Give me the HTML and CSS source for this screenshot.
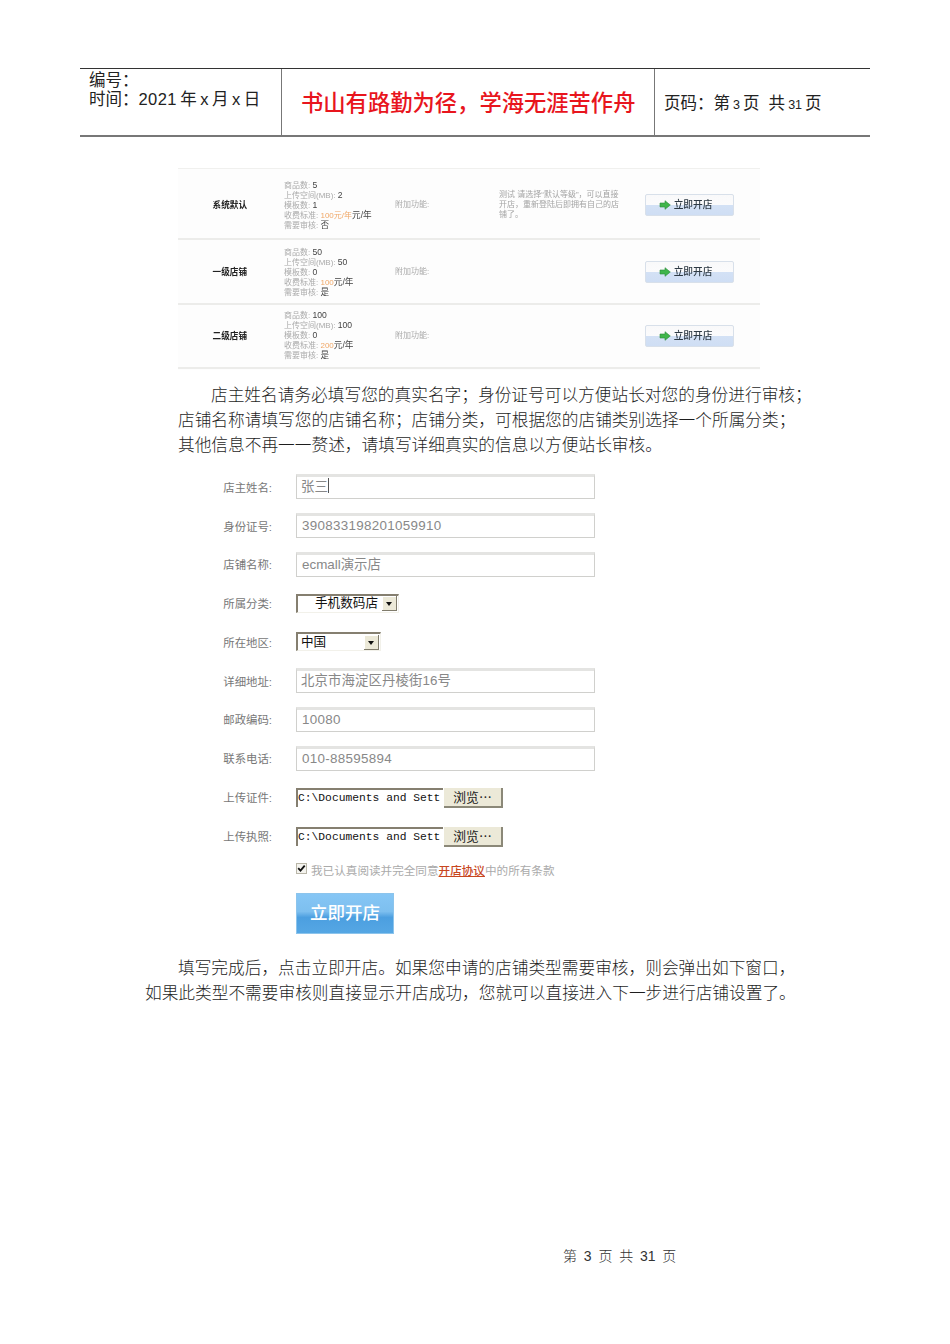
FILE: index.html
```html
<!DOCTYPE html>
<html lang="zh-CN">
<head>
<meta charset="utf-8">
<title>开店</title>
<link rel="stylesheet" href="styles.css">
</head>
<body>
<div class="page">
  <header class="doc-head">
    <div class="hc hc-left">编号&#xFF1A;<br>时间&#xFF1A;<span class="year">2021</span><span class="gap">年</span>x<span class="gap">月</span>x<span class="gap">日</span></div>
    <div class="hc hc-mid">书山有路勤为径&#xFF0C;学海无涯苦作舟</div>
    <div class="hc hc-right">页码&#xFF1A;第<span class="small-num">3</span>页&nbsp;&nbsp;共<span class="small-num">31</span>页</div>
  </header>

  <section class="plans">
    <div class="plan plan-pad">
      <div class="plan-name">系统默认</div>
      <div class="plan-spec"><span>商品数: <b>5</b></span><span>上传空间(MB): <b>2</b></span><span>模板数: <b>1</b></span><span>收费标准: <em>100元/年</em><b>元/年</b></span><span>需要审核: <b>否</b></span></div>
      <div class="plan-extra">附加功能:</div>
      <div class="plan-desc">测试 请选择“默认等级”&#xFF0C;可以直接开店&#xFF0C;重新登陆后即拥有自己的店铺了。</div>
      <div class="plan-btn"><svg class="arrow" viewBox="0 0 12 10"><path d="M1 3h5V0.7L11.3 5 6 9.3V7H1z" fill="#3fb54a" stroke="#2a8a3a" stroke-width=".6"/></svg>立即开店</div>
    </div>
    <div class="plan plan-b plan-pad">
      <div class="plan-name">一级店铺</div>
      <div class="plan-spec"><span>商品数: <b>50</b></span><span>上传空间(MB): <b>50</b></span><span>模板数: <b>0</b></span><span>收费标准: <em>100</em><b>元/年</b></span><span>需要审核: <b>是</b></span></div>
      <div class="plan-extra">附加功能:</div>
      <div class="plan-desc"></div>
      <div class="plan-btn"><svg class="arrow" viewBox="0 0 12 10"><path d="M1 3h5V0.7L11.3 5 6 9.3V7H1z" fill="#3fb54a" stroke="#2a8a3a" stroke-width=".6"/></svg>立即开店</div>
    </div>
    <div class="plan plan-b">
      <div class="plan-name">二级店铺</div>
      <div class="plan-spec"><span>商品数: <b>100</b></span><span>上传空间(MB): <b>100</b></span><span>模板数: <b>0</b></span><span>收费标准: <em>200</em><b>元/年</b></span><span>需要审核: <b>是</b></span></div>
      <div class="plan-extra">附加功能:</div>
      <div class="plan-desc"></div>
      <div class="plan-btn"><svg class="arrow" viewBox="0 0 12 10"><path d="M1 3h5V0.7L11.3 5 6 9.3V7H1z" fill="#3fb54a" stroke="#2a8a3a" stroke-width=".6"/></svg>立即开店</div>
    </div>
  </section>

  <p class="para para-1">店主姓名请务必填写您的真实名字&#xFF1B;身份证号可以方便站长对您的身份进行审核&#xFF1B;<br><span class="out">店铺名称请填写您的店铺名称&#xFF1B;店铺分类&#xFF0C;可根据您的店铺类别选择一个所属分类&#xFF1B;</span><br><span class="out">其他信息不再一一赘述&#xFF0C;请填写详细真实的信息以方便站长审核。</span></p>

  <section class="form">
    <div class="row"><label>店主姓名:</label><div class="field field-cjk">张三<i class="caret"></i></div></div>
    <div class="row"><label>身份证号:</label><div class="field">390833198201059910</div></div>
    <div class="row"><label>店铺名称:</label><div class="field field-tight">ecmall演示店</div></div>
    <div class="row"><label>所属分类:</label><div class="select select-cat"><span class="select-text select-indent">手机数码店</span><span class="select-arrow"></span></div></div>
    <div class="row"><label>所在地区:</label><div class="select select-area"><span class="select-text">中国</span><span class="select-arrow"></span></div></div>
    <div class="row"><label>详细地址:</label><div class="field field-cjk">北京市海淀区丹棱街16号</div></div>
    <div class="row"><label>邮政编码:</label><div class="field">10080</div></div>
    <div class="row"><label>联系电话:</label><div class="field">010-88595894</div></div>
    <div class="row"><label>上传证件:</label><div class="file"><span class="file-path">C:\Documents and Sett</span><span class="file-btn">浏览…</span></div></div>
    <div class="row"><label>上传执照:</label><div class="file"><span class="file-path">C:\Documents and Sett</span><span class="file-btn">浏览…</span></div></div>
    <div class="agree"><svg class="check" viewBox="0 0 11 11"><rect x=".5" y=".5" width="10" height="10" fill="#f4f3ee" stroke="#b9b6a8"/><path d="M2.2 5.2l2.3 2.5 4.2-5" fill="none" stroke="#111" stroke-width="1.8"/></svg><span>我已认真阅读并完全同意<a>开店协议</a>中的所有条款</span></div>
    <div class="submit">立即开店</div>
  </section>

  <p class="para para-2">填写完成后&#xFF0C;点击立即开店。如果您申请的店铺类型需要审核&#xFF0C;则会弹出如下窗口&#xFF0C;<br><span class="out2">如果此类型不需要审核则直接显示开店成功&#xFF0C;您就可以直接进入下一步进行店铺设置了。</span></p>

  <footer class="foot">第 <span class="foot-num">3</span> 页 共 <span class="foot-num">31</span> 页</footer>
</div>
</body>
</html>
```
FILE: styles.css
```css
html, body { margin: 0; padding: 0; background: #fff; }
.page {
  width: 950px;
  height: 1344px;
  overflow: hidden;
  padding-top: 68px;
  box-sizing: border-box;
  font-family: "Liberation Sans", "Noto Sans CJK SC", sans-serif;
  color: #222;
}
.doc-head {
  display: grid;
  grid-template-columns: 201px 374px 215px;
  grid-template-rows: 66px;
  margin-left: 80px;
  width: 790px;
  height: 69px;
  box-sizing: border-box;
  border-top: 1px solid #333;
  border-bottom: 2px solid #777;
}
.hc { font-size: 16.5px; line-height: 19px; }
.hc-left { padding: 2px 0 0 9px; white-space: nowrap; }
.hc-mid {
  border-left: 1px solid #777;
  border-right: 1px solid #777;
  color: #e8151d;
  font-size: 22.3px;
  font-weight: 500;
  line-height: 70px;
  padding-left: 19px;
  white-space: nowrap;
}
.hc-right { padding: 25px 0 0 9px; white-space: nowrap; }
.year { letter-spacing: .4px; }
.gap { margin: 0 3.5px; }
.small-num { font-size: 12.5px; margin: 0 3px; }

.plans {
  margin: 31px 0 0 178px;
  width: 582px;
  height: 202px;
  background: #fdfdfd;
  border-top: 1px solid #f0f0ee;
  box-sizing: border-box;
  filter: blur(0.3px);
}
.plan {
  display: grid;
  grid-template-columns: 106px 111px 104px 146px 88px;
  align-items: center;
  height: 71px;
  border-bottom: 2px solid #ececea;
  box-sizing: border-box;
  font-size: 8px;
  line-height: 10px;
  color: #aaa;
}
.plan-pad { padding-top: 4px; }
.plan-pad > :not(.plan-spec) { margin-bottom: 2px; }
.plan-b { height: 64.5px; }
.plan-name { color: #222; font-weight: 700; font-size: 8.6px; text-align: right; padding-right: 37px; white-space: nowrap; }
.plan-spec { display: flex; flex-direction: column; white-space: nowrap; }
.plan-spec span { height: 10px; }
.plan-spec b { font-weight: 400; font-size: 8.6px; line-height: 8px; color: #444; }
.plan-spec em { font-style: normal; color: #f0a868; }
.plan-desc { width: 120px; line-height: 10px; color: #a4a4a4; }
.plan-btn {
  display: flex;
  align-items: center;
  gap: 3px;
  justify-content: center;
  width: 89px;
  height: 22px;
  padding-right: 8px;
  box-sizing: border-box;
  border: 1px solid #d8e0ea;
  border-radius: 2px;
  background: linear-gradient(#f9f9fa 0, #fbfbfc 50%, #d3e1f5 52%, #cfdef4 100%);
  font-size: 9.7px;
  font-weight: 500;
  color: #2e3a44;
  white-space: nowrap;
}
.arrow { width: 12px; height: 10px; flex: none; }

.para {
  margin: 12px 0 0;
  font-size: 16.7px;
  line-height: 25px;
  color: #1e1e1e;
  font-family: "Noto Sans CJK SC", sans-serif;
  font-weight: 300;
  white-space: nowrap;
}
.para-1 { padding-left: 211px; }
.out { margin-left: -33px; }
.para-2 { margin-top: 20.5px; padding-left: 178px; }
.out2 { margin-left: -33px; }

.form { margin: 10.5px 0 0 178px; width: 422px; }
.row {
  display: flex;
  align-items: center;
  height: 38.75px;
}
.row label {
  width: 94px;
  text-align: right;
  font-size: 11.4px;
  color: #777;
  white-space: nowrap;
  flex: none;
  margin-right: 24px;
}
.field {
  width: 299px;
  height: 25px;
  box-sizing: border-box;
  border: 1px solid #d0d0cd;
  border-top: 3px solid #e4e4e2;
  padding-left: 5px;
  font-size: 13.4px;
  line-height: 20px;
  color: #888;
  letter-spacing: .3px;
  white-space: nowrap;
}
.field-cjk { padding-left: 4px; letter-spacing: .1px; }
.field-tight { letter-spacing: 0; }
.caret { display: inline-block; width: 1px; height: 15px; background: #555; vertical-align: -2px; }
.select {
  display: flex;
  align-items: center;
  height: 19px;
  box-sizing: border-box;
  border: 1px solid #f2f1ea;
  border-top: 2px solid #857f70;
  border-left: 2px solid #857f70;
  background: #fff;
  padding-right: 1px;
}
.select-cat { width: 103px; }
.select-area { width: 85px; }
.select-text { flex: 1; font-size: 12.6px; line-height: 15px; color: #111; white-space: nowrap; padding-left: 3px; }
.select-indent { padding-left: 17px; }
.select-arrow {
  position: relative;
  width: 15px;
  height: 15px;
  flex: none;
  background: #ece9d8;
  box-shadow: inset -1px -1px 0 #807c6c, inset 1px 1px 0 #fff;
}
.select-arrow::after {
  content: "";
  position: absolute;
  left: 4px;
  top: 6px;
  border: 3.5px solid transparent;
  border-top: 4px solid #111;
  border-bottom: 0;
}
.file { display: flex; align-items: flex-start; gap: 1px; height: 20px; margin-top: 2px; }
.file-path {
  width: 147px;
  height: 19px;
  box-sizing: border-box;
  border-top: 2px solid #857f70;
  border-left: 2px solid #857f70;
  background: #fff;
  font-family: "Liberation Mono", "DejaVu Sans Mono", monospace;
  font-size: 11.3px;
  line-height: 17px;
  color: #111;
  white-space: nowrap;
  overflow: hidden;
}
.file-btn {
  width: 59px;
  height: 20px;
  box-sizing: border-box;
  background: #ece9d8;
  border-right: 2px solid #8b8878;
  border-bottom: 2px solid #8b8878;
  font-family: "Noto Sans CJK SC", sans-serif;
  font-size: 12.8px;
  line-height: 18px;
  text-align: center;
  color: #222;
}
.agree {
  display: flex;
  align-items: center;
  height: 30px;
  margin-left: 118px;
  font-size: 11.6px;
  color: #aaa;
  white-space: nowrap;
}
.check { width: 11px; height: 11px; margin: -4px 4px 0 0; flex: none; }
.agree a { color: #c8471f; text-decoration: underline; font-weight: 500; }
.submit {
  margin: 8px 0 0 118px;
  width: 98px;
  height: 41px;
  box-sizing: border-box;
  border: 1px solid #8cc4ec;
  background: linear-gradient(#86c6f5 0, #7dbfef 45%, #4c9fe0 60%, #55a7e4 100%);
  color: #fff;
  font-size: 17.5px;
  font-weight: 500;
  line-height: 39px;
  text-align: center;
}
.foot {
  margin: 240px 0 0 563px;
  font-family: "Noto Sans CJK SC", sans-serif;
  font-weight: 300;
  font-size: 14px;
  line-height: 20px;
  word-spacing: 3.7px;
  color: #333;
  white-space: nowrap;
}
.foot-num { font-family: "Liberation Sans", sans-serif; font-weight: 400; }
```
